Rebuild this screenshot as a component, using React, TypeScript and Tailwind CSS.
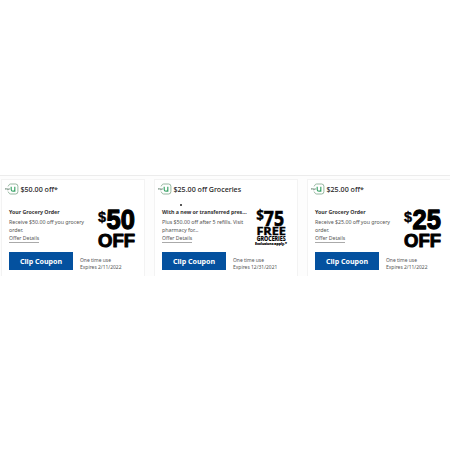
type Offer = {
  title: string;
  heading: string;
  lines: string[];
  expires: string;
  art: 'fifty' | 'seventyFive' | 'twentyFive';
};

const offers: Offer[] = [
  {
    title: '$50.00 off*',
    heading: 'Your Grocery Order',
    lines: ['Receive $50.00 off you grocery', 'order.'],
    expires: 'Expires 2/11/2022',
    art: 'fifty',
  },
  {
    title: '$25.00 off Groceries',
    heading: 'With a new or transferred pres...',
    lines: ['Plus $50.00 off after 5 refills. Visit', 'pharmacy for...'],
    expires: 'Expires 12/31/2021',
    art: 'seventyFive',
  },
  {
    title: '$25.00 off*',
    heading: 'Your Grocery Order',
    lines: ['Receive $25.00 off you grocery', 'order.'],
    expires: 'Expires 2/11/2022',
    art: 'twentyFive',
  },
];

function ForULogo() {
  return (
    <svg className="h-3 w-[14px] shrink-0" viewBox="0 0 14 12" fill="none">
      <path
        d="M3.1 3.4 L4.2 1.7 Q4.7 1 5.6 1 H10.6 Q12.9 1 12.9 3.4 V8.6 Q12.9 11 10.6 11 H5.6 Q4.7 11 4.2 10.3 L3.1 8.6"
        stroke="#6a9a78"
        strokeWidth="0.7"
      />
      <path d="M0.3 5.7h1.5M0.8 5v2M2.3 5.7h1v1.2h-1zM4 7V5.7h0.8" stroke="#4b6f58" strokeWidth="0.5" />
      <path d="M6.2 3.8V6.4Q6.2 8.2 8 8.2T9.8 6.4M9.8 3.8V8.7" stroke="#3da56a" strokeWidth="1.2" />
    </svg>
  );
}

function BigOff({ amount }: { amount: string }) {
  return (
    <svg
      className="h-[42px] w-[40px] overflow-visible"
      viewBox="0 0 40 42"
      fill="#000"
      stroke="#000"
      strokeLinejoin="round"
      fontFamily="'Liberation Sans', Arial, sans-serif"
      fontWeight="700"
    >
      <text x="1" y="14.6" fontSize="15" strokeWidth="0.4" textLength="8" lengthAdjust="spacingAndGlyphs">$</text>
      <text x="9.5" y="22.2" fontSize="28" strokeWidth="1.3" textLength="28.3" lengthAdjust="spacingAndGlyphs">{amount}</text>
      <text x="1.1" y="40" fontSize="18.7" strokeWidth="1" textLength="37" lengthAdjust="spacingAndGlyphs">OFF</text>
    </svg>
  );
}

function FreeGroceries() {
  return (
    <svg
      className="h-[42px] w-[34px] overflow-visible"
      viewBox="0 0 34 42"
      fill="#000"
      stroke="#000"
      fontFamily="'Open Sans', 'Noto Sans', sans-serif"
      fontWeight="700"
    >
      <text x="1.3" y="13" fontSize="14" strokeWidth="0.3" textLength="7.7" lengthAdjust="spacingAndGlyphs">$</text>
      <text x="8.8" y="18.8" fontSize="22" strokeWidth="0.7" textLength="20.2" lengthAdjust="spacingAndGlyphs">75</text>
      <text x="1.4" y="27.8" fontSize="11.2" strokeWidth="0.4" textLength="29.5" lengthAdjust="spacingAndGlyphs">FREE</text>
      <text x="1.8" y="33.7" fontSize="6.5" strokeWidth="0.2" textLength="28.9" lengthAdjust="spacingAndGlyphs">GROCERIES</text>
      <text x="0" y="37.9" fontSize="4.1" strokeWidth="0.2" textLength="32" lengthAdjust="spacingAndGlyphs">Exclusions apply.*</text>
    </svg>
  );
}

function CouponCard({ offer }: { offer: Offer }) {
  return (
    <article className="relative h-[98px] w-[144px] shrink-0 border-x border-t border-[#f3f3f3] bg-white pl-[7px] pt-[3px]">
      <header className="-ml-1 flex h-3 items-center gap-[1.5px]">
        <ForULogo />
        <h2 className="whitespace-nowrap text-[7.1px] font-medium leading-3 text-[#222]">{offer.title}</h2>
      </header>
      <div className="flex h-[57px] pt-[12px]">
        <div className="w-[88px] shrink-0 whitespace-nowrap pt-px text-[#555]">
          <h3 className="h-[10px] text-[5.3px] font-bold leading-[8px] tracking-[-0.02px] text-[#333]">{offer.heading}</h3>
          {offer.lines.map((line) => (
            <p key={line} className="text-[5.3px] leading-[8px] tracking-[-0.03px]">{line}</p>
          ))}
          <a className="block h-[9px] w-fit border-b border-[#aaa] text-[5.1px] leading-[8px]">Offer Details</a>
        </div>
        <div className={offer.art === 'seventyFive' ? 'ml-[5px]' : ''}>
          {offer.art === 'seventyFive' ? <FreeGroceries /> : <BigOff amount={offer.art === 'fifty' ? '50' : '25'} />}
        </div>
      </div>
      <footer className="flex gap-[7px]">
        <button className="h-[18px] w-16 shrink-0 bg-[#04519f] text-[7.1px] font-bold leading-[18px] text-white">
          Clip Coupon
        </button>
        <div className="whitespace-nowrap pt-[4.5px] text-[4.95px] leading-[7px] text-[#555]">
          <p>One time use</p>
          <p>{offer.expires}</p>
        </div>
      </footer>
      {offer.art === 'seventyFive' && <i className="absolute left-[25px] top-[24px] size-[1.5px] rounded-full bg-[#222]" />}
    </article>
  );
}

export default function App() {
  return (
    <main className="h-[450px] w-[450px] overflow-hidden bg-white pt-[175px] font-['Noto_Sans','Open_Sans',sans-serif]">
      <section className="h-[101px] overflow-hidden border-t border-[#ececec] bg-[#fdfdfd] pl-px pt-[3px]">
        <div className="flex gap-[9px]">
          {offers.map((offer) => (
            <CouponCard key={offer.art} offer={offer} />
          ))}
        </div>
      </section>
    </main>
  );
}
